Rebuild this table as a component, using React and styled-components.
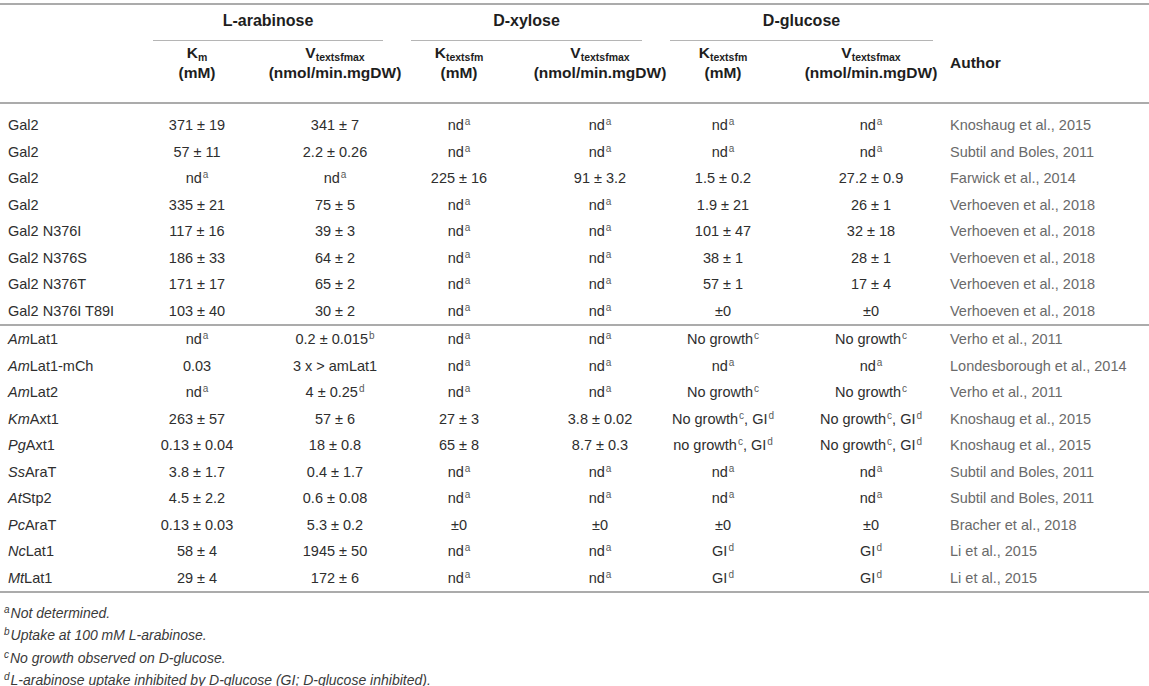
import styled, { createGlobalStyle } from "styled-components";

const GlobalStyle = createGlobalStyle`
  body {
    margin: 0;
    background: #fff;
    font-family: "Liberation Sans", Arial, sans-serif;
    color: #2e2e2e;
  }
`;

// column tracks: width, alignment and left padding of the content box
const COLS = [
  { w: 140, align: "left", pl: 8 },
  { w: 114 },
  { w: 162 },
  { w: 86 },
  { w: 196 },
  { w: 50 },
  { w: 194, pl: 52 },
  { w: 0, align: "left", pl: 8 },
];
const template = COLS.map((c) => (c.w ? `${c.w}px` : "1fr")).join(" ");

const ROWS_A = [
  [["", "Gal2"], "371 ± 19", "341 ± 7", "nd^a", "nd^a", "nd^a", "nd^a", "Knoshaug et al., 2015"],
  [["", "Gal2"], "57 ± 11", "2.2 ± 0.26", "nd^a", "nd^a", "nd^a", "nd^a", "Subtil and Boles, 2011"],
  [["", "Gal2"], "nd^a", "nd^a", "225 ± 16", "91 ± 3.2", "1.5 ± 0.2", "27.2 ± 0.9", "Farwick et al., 2014"],
  [["", "Gal2"], "335 ± 21", "75 ± 5", "nd^a", "nd^a", "1.9 ± 21", "26 ± 1", "Verhoeven et al., 2018"],
  [["", "Gal2 N376I"], "117 ± 16", "39 ± 3", "nd^a", "nd^a", "101 ± 47", "32 ± 18", "Verhoeven et al., 2018"],
  [["", "Gal2 N376S"], "186 ± 33", "64 ± 2", "nd^a", "nd^a", "38 ± 1", "28 ± 1", "Verhoeven et al., 2018"],
  [["", "Gal2 N376T"], "171 ± 17", "65 ± 2", "nd^a", "nd^a", "57 ± 1", "17 ± 4", "Verhoeven et al., 2018"],
  [["", "Gal2 N376I T89I"], "103 ± 40", "30 ± 2", "nd^a", "nd^a", "±0", "±0", "Verhoeven et al., 2018"],
];

const ROWS_B = [
  [["Am", "Lat1"], "nd^a", "0.2 ± 0.015^b", "nd^a", "nd^a", "No growth^c", "No growth^c", "Verho et al., 2011"],
  [["Am", "Lat1-mCh"], "0.03", "3 x > amLat1", "nd^a", "nd^a", "nd^a", "nd^a", "Londesborough et al., 2014"],
  [["Am", "Lat2"], "nd^a", "4 ± 0.25^d", "nd^a", "nd^a", "No growth^c", "No growth^c", "Verho et al., 2011"],
  [["Km", "Axt1"], "263 ± 57", "57 ± 6", "27 ± 3", "3.8 ± 0.02", "No growth^c, GI^d", "No growth^c, GI^d", "Knoshaug et al., 2015"],
  [["Pg", "Axt1"], "0.13 ± 0.04", "18 ± 0.8", "65 ± 8", "8.7 ± 0.3", "no growth^c, GI^d", "No growth^c, GI^d", "Knoshaug et al., 2015"],
  [["Ss", "AraT"], "3.8 ± 1.7", "0.4 ± 1.7", "nd^a", "nd^a", "nd^a", "nd^a", "Subtil and Boles, 2011"],
  [["At", "Stp2"], "4.5 ± 2.2", "0.6 ± 0.08", "nd^a", "nd^a", "nd^a", "nd^a", "Subtil and Boles, 2011"],
  [["Pc", "AraT"], "0.13 ± 0.03", "5.3 ± 0.2", "±0", "±0", "±0", "±0", "Bracher et al., 2018"],
  [["Nc", "Lat1"], "58 ± 4", "1945 ± 50", "nd^a", "nd^a", "GI^d", "GI^d", "Li et al., 2015"],
  [["Mt", "Lat1"], "29 ± 4", "172 ± 6", "nd^a", "nd^a", "GI^d", "GI^d", "Li et al., 2015"],
];

const Page = styled.div`
  padding-top: 3px;
`;

const Table = styled.div`
  border-top: 2px solid #ababab;
  border-bottom: 2px solid #ababab;
`;

const GroupRow = styled.div`
  display: flex;
  gap: 28px;
  padding: 6px 0 0 153px;
`;

const Group = styled.div`
  width: ${(p) => p.$w}px;
  text-align: center;
  font-weight: bold;
  font-size: 16px;
  line-height: 20px;
  color: #1e1e1e;
  padding-bottom: 9px;
  border-bottom: 1px solid #b5b5b5;
`;

const HeadRow = styled.div`
  display: grid;
  grid-template-columns: ${template};
  padding: 2px 0 19px;
  border-bottom: 2px solid #ababab;
`;

const HeadCell = styled.div`
  display: flex;
  flex-direction: column;
  justify-content: center;
  align-items: ${(p) => (p.$align === "left" ? "flex-start" : "center")};
  padding-left: ${(p) => p.$pl || 0}px;
  font-weight: bold;
  font-size: 15.5px;
  line-height: 20px;
  color: #1e1e1e;
  white-space: nowrap;
`;

const Sub = styled.sub`
  font-size: 10.5px;
  line-height: 0;
  vertical-align: baseline;
  position: relative;
  top: 3px;
`;

const Body = styled.div`
  padding-top: 8px;
`;

const RowGroup = styled.div`
  border-top: ${(p) => (p.$divider ? "2px solid #ababab" : "none")};
`;

const Row = styled.div`
  display: grid;
  grid-template-columns: ${template};
  height: 26.5px;
  align-items: center;
`;

const Cell = styled.div`
  display: flex;
  justify-content: ${(p) => (p.$align === "left" ? "flex-start" : "center")};
  padding-left: ${(p) => p.$pl || 0}px;
  font-size: 14.5px;
  line-height: 18px;
  white-space: nowrap;
  color: ${(p) => (p.$muted ? "#6a6a6a" : "#2e2e2e")};
`;

const Sup = styled.sup`
  font-size: 10px;
  line-height: 0;
  vertical-align: baseline;
  position: relative;
  top: -5px;
  color: #5a5a5a;
  margin-left: 1px;
`;

const Notes = styled.div`
  padding: 9px 0 0 4px;
`;

const Note = styled.div`
  font-style: italic;
  font-size: 14px;
  line-height: 22.3px;
  color: #3a3a3a;
`;

const NoteSup = styled.sup`
  font-size: 10px;
  line-height: 0;
  vertical-align: baseline;
  position: relative;
  top: -5px;
  margin-right: 1px;
`;

const rich = (text) =>
  text.split(/\^([a-d])/).map((part, i) =>
    i % 2 ? <Sup key={i}>{part}</Sup> : part
  );

const DataRow = ({ row }) => {
  const [[pre, name], ...rest] = row;
  return (
    <Row>
      <Cell $align="left" $pl={8}>
        <span>
          {pre && <i>{pre}</i>}
          {name}
        </span>
      </Cell>
      {rest.map((v, i) => {
        const col = COLS[i + 1];
        const isAuthor = i === rest.length - 1;
        return (
          <Cell key={i} $align={col.align} $pl={col.pl} $muted={isAuthor}>
            <span>{rich(v)}</span>
          </Cell>
        );
      })}
    </Row>
  );
};

const unit = (k, sub, u) => (
  <>
    <span>
      {k}
      <Sub>{sub}</Sub>
    </span>
    <span>{u}</span>
  </>
);

export default function App() {
  return (
    <Page>
      <GlobalStyle />
      <Table>
        <GroupRow>
          <Group $w={230}>L-arabinose</Group>
          <Group $w={231}>D-xylose</Group>
          <Group $w={263}>D-glucose</Group>
        </GroupRow>
        <HeadRow>
          <HeadCell $align="left" $pl={8} />
          <HeadCell>{unit("K", "m", "(mM)")}</HeadCell>
          <HeadCell>{unit("V", "textsfmax", "(nmol/min.mgDW)")}</HeadCell>
          <HeadCell>{unit("K", "textsfm", "(mM)")}</HeadCell>
          <HeadCell>{unit("V", "textsfmax", "(nmol/min.mgDW)")}</HeadCell>
          <HeadCell>{unit("K", "textsfm", "(mM)")}</HeadCell>
          <HeadCell $pl={52}>{unit("V", "textsfmax", "(nmol/min.mgDW)")}</HeadCell>
          <HeadCell $align="left" $pl={8}>Author</HeadCell>
        </HeadRow>
        <Body>
          <RowGroup>
            {ROWS_A.map((r, i) => (
              <DataRow key={i} row={r} />
            ))}
          </RowGroup>
          <RowGroup $divider>
            {ROWS_B.map((r, i) => (
              <DataRow key={i} row={r} />
            ))}
          </RowGroup>
        </Body>
      </Table>
      <Notes>
        <Note>
          <NoteSup>a</NoteSup>Not determined.
        </Note>
        <Note>
          <NoteSup>b</NoteSup>Uptake at 100 mM L-arabinose.
        </Note>
        <Note>
          <NoteSup>c</NoteSup>No growth observed on D-glucose.
        </Note>
        <Note>
          <NoteSup>d</NoteSup>L-arabinose uptake inhibited by D-glucose (GI; D-glucose inhibited).
        </Note>
      </Notes>
    </Page>
  );
}
